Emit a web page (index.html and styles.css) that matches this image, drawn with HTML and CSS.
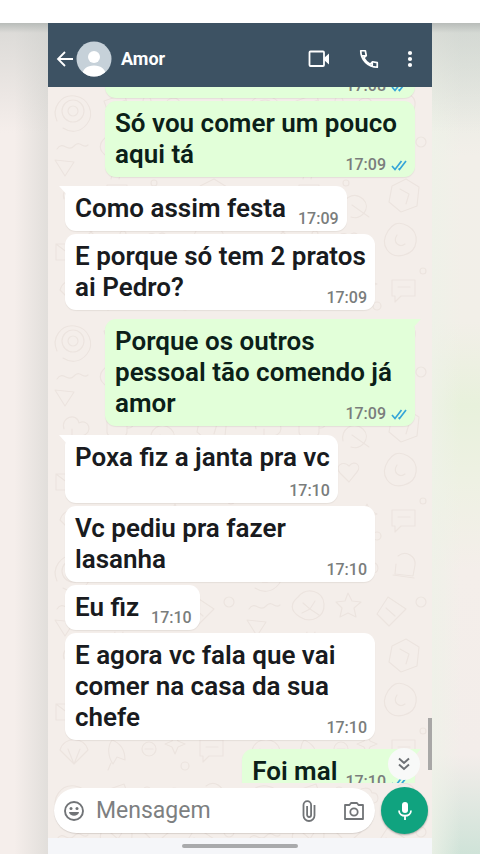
FILE: index.html
```html
<!DOCTYPE html>
<html lang="pt-BR">
<head>
<meta charset="utf-8">
<meta name="viewport" content="width=device-width, initial-scale=1">
<title>Amor</title>
<link rel="stylesheet" href="styles.css">
</head>
<body>
<svg class="defs" width="0" height="0" aria-hidden="true">
  <symbol id="ticks" viewBox="0 0 16 12"><path d="M1 7l3 3.500L10.500 2M7.500 9.500l1 1L15 2" fill="none" stroke="#35a5d8" stroke-width="1.700"/></symbol>
</svg>
<main class="stage">
  <section class="phone">
    <header class="topbar">
      <button class="icon back" aria-label="Voltar"><svg width="18" height="18" viewBox="0 0 18 18"><path d="M17 9H2M9 2L2 9l7 7" fill="none" stroke="#fff" stroke-width="1.800"/></svg></button>
      <svg class="avatar" width="36" height="36" viewBox="0 0 36 36" aria-hidden="true"><defs><clipPath id="face"><circle cx="18" cy="18" r="17.500"/></clipPath></defs><g clip-path="url(#face)"><path fill="#c6d1d9" d="M0 0h36v36H0z"/><circle cx="18" cy="16" r="6" fill="#fff"/><path d="M6 36c0-8 5-11.500 12-11.500S30 28 30 36z" fill="#fff"/></g></svg>
      <h1 class="name">Amor</h1>
      <nav class="actions">
        <button class="icon" aria-label="Chamada de vídeo"><svg width="24" height="24" viewBox="0 0 24 24"><rect x="2.500" y="4.500" width="14.500" height="14.500" rx="1" fill="none" stroke="#fff" stroke-width="1.800"/><path d="M17 11l5-4.500v11L17 13z" fill="#fff"/></svg></button>
        <button class="icon" aria-label="Ligar"><svg width="22" height="22" viewBox="0 0 24 24"><path d="M3 3h5l1 5.300-2.700 2.500c1.700 3.200 3.800 5.200 7 6.900l2.500-2.700 5.200 1v5C11 21 3 13 3 3zM4 8.500h4.500M15.500 15.500V20" fill="none" stroke="#fff" stroke-width="1.900" stroke-linejoin="round"/></svg></button>
        <button class="icon" aria-label="Mais opções"><svg width="6" height="20" viewBox="0 0 6 20"><g fill="#fff"><circle cx="3" cy="4" r="2.100"/><circle cx="3" cy="10" r="2.100"/><circle cx="3" cy="16" r="2.100"/></g></svg></button>
      </nav>
    </header>

    <div class="chat">
      <svg class="wallpaper" aria-hidden="true">
        <defs>
          <pattern id="doodles" width="192" height="230" patternUnits="userSpaceOnUse">
            <g fill="none" stroke="#ece4df" stroke-width="1.200" stroke-linecap="round" stroke-linejoin="round">
              <circle cx="25" cy="24" r="11"/><circle cx="25" cy="24" r="5"/><path d="M9 34c-6-13 4-27 18-25s20 18 12 28-18 8-24 4"/>
              <path d="M56 14l20-7 6 16-20 8zM60 20l18-7"/><circle cx="99" cy="14" r="4"/>
              <path d="M118 26c-6-1-6-9 0-9 1-7 12-8 14-1 7-1 8 9 2 10z"/>
              <path d="M158 9c8-6 18 0 17 9l-2 11-18-2 1-10M153 28l21 3"/>
              <path d="M9 62c6-9 11 4 17-3s9 4 14-1M7 73l10 16 9-14z"/>
              <path d="M58 50c9-11 25-6 26 7s-13 20-24 13-9-14-2-20zM63 56l7 6 5-8M62 66l8-4 9 6"/>
              <path d="M108 46l4 8 9 1-7 6 2 9-8-4-8 4 2-9-6-6 9-1z"/>
              <path d="M148 50l18 12-17 17-12-12zM146 61l9 8"/><circle cx="181" cy="55" r="5"/>
              <path d="M16 112c-4-12 13-17 15-6 10-5 15 10 3 13-1 10-14 8-13 0M24 112v15"/>
              <path d="M59 98h20v17c0 8-20 8-20 0zM79 102c9-2 9 10 0 9M63 92c0-5 4-3 4-7M71 92c0-5 4-3 4-7"/>
              <circle cx="106" cy="96" r="3"/><path d="M103 124c-3-11 10-21 20-12 9 9-2 22-12 18M112 118l17 12"/>
              <path d="M152 99l14-7 13 8-2 19-16 6-12-10zM160 102l9 5-3 10"/>
              <path d="M8 157h24v16H8zM8 157l12 9 12-9M40 142l6 6m0-6l-6 6"/>
              <path d="M60 167c0-12 7-18 15-17s14 8 12 20zM58 168l31 3-1 6-31-3z"/><circle cx="75" cy="147" r="3"/>
              <path d="M109 149c6-7 13 0 8 6l-8 10-9-9c-6-7 3-13 9-7z"/>
              <path d="M148 144c-9 14 1 28 16 24s16-22 4-29-17 1-20 5zM157 148c-5 8 3 13 8 9"/>
              <path d="M12 203c4-14 24-14 28 0l-14 14zM20 202l6 15 6-15"/>
              <path d="M64 193c8 3 13 10 13 20l-8-3-4 7c-5-7-6-17-1-24zM63 216l-3 7"/>
              <circle cx="101" cy="202" r="7"/><path d="M97 202h8M127 187l3 7 7 3-7 3-3 7-3-7-7-3 7-3z"/>
              <path d="M152 193h23v16h-14l-6 6v-6h-3zM158 200h12"/><circle cx="183" cy="184" r="3"/><circle cx="137" cy="219" r="4"/>
            </g>
          </pattern>
        </defs>
        <rect width="100%" height="100%" fill="url(#doodles)"/>
      </svg>

      <div class="thread">
        <ol class="messages">
          <li class="bubble out wide"><span class="meta"><time>17:08</time><svg width="16" height="12"><use href="#ticks"/></svg></span></li>
          <li class="bubble out"><p class="text">Só vou comer um pouco aqui tá</p><span class="meta"><time>17:09</time><svg width="16" height="12"><use href="#ticks"/></svg></span></li>
          <li class="bubble in first row"><p class="text">Como assim festa</p><span class="meta"><time>17:09</time></span></li>
          <li class="bubble in"><p class="text">E porque só tem 2 pratos ai Pedro?</p><span class="meta"><time>17:09</time></span></li>
          <li class="bubble out first"><p class="text">Porque os outros pessoal tão comendo já amor</p><span class="meta"><time>17:09</time><svg width="16" height="12"><use href="#ticks"/></svg></span></li>
          <li class="bubble in first stacked"><p class="text">Poxa fiz a janta pra vc</p><span class="meta"><time>17:10</time></span></li>
          <li class="bubble in"><p class="text">Vc pediu pra fazer lasanha</p><span class="meta"><time>17:10</time></span></li>
          <li class="bubble in row"><p class="text">Eu fiz</p><span class="meta"><time>17:10</time></span></li>
          <li class="bubble in"><p class="text">E agora vc fala que vai comer na casa da sua chefe</p><span class="meta"><time>17:10</time></span></li>
          <li class="bubble out first row"><p class="text">Foi mal</p><span class="meta"><time>17:10</time><svg width="16" height="12"><use href="#ticks"/></svg></span></li>
        </ol>
        <span class="scrollbar"></span>
        <button class="jump" aria-label="Ir para o fim"><svg width="16" height="16" viewBox="0 0 16 16"><path d="M3 2.500l5 4.500 5-4.500M3 8.500l5 4.500 5-4.500" fill="none" stroke="#6d7175" stroke-width="1.900"/></svg></button>
      </div>

      <form class="composer">
        <div class="field">
          <button type="button" class="icon" aria-label="Emoji"><svg width="22" height="22" viewBox="0 0 22 22"><circle cx="11" cy="11" r="9" fill="none" stroke="#717477" stroke-width="1.900"/><circle cx="8" cy="8.500" r="1.500" fill="#717477"/><circle cx="14" cy="8.500" r="1.500" fill="#717477"/><path d="M6 12h10c-.6 5-9.400 5-10 0z" fill="#717477"/></svg></button>
          <input type="text" placeholder="Mensagem" aria-label="Mensagem">
          <button type="button" class="icon" aria-label="Anexar"><svg width="16" height="22" viewBox="0 0 16 22"><path d="M13.500 5v10.500a5.500 5.500 0 0 1-11 0V5a3.800 3.800 0 0 1 7.600 0v10a2 2 0 0 1-4 0V6" fill="none" stroke="#717477" stroke-width="1.800"/></svg></button>
          <button type="button" class="icon camera" aria-label="Câmera"><svg width="22" height="20" viewBox="0 0 22 20"><path d="M2 4h4.500L8 2h6l1.500 2H20v14H2z" fill="none" stroke="#717477" stroke-width="1.800" stroke-linejoin="round"/><circle cx="11" cy="11" r="3.700" fill="none" stroke="#717477" stroke-width="1.800"/></svg></button>
        </div>
        <button type="button" class="mic" aria-label="Gravar áudio"><svg width="16" height="20" viewBox="0 0 16 20"><rect x="5" y="1" width="6" height="11" rx="3" fill="#fff"/><path d="M2 9.500c0 7 12 7 12 0M8 15v4" fill="none" stroke="#fff" stroke-width="1.800"/></svg></button>
      </form>
    </div>
    <div class="gesture"><span></span></div>
  </section>
</main>
</body>
</html>
```
FILE: styles.css
```css
* { box-sizing: border-box; }

body {
  margin: 0;
  height: 100vh;
  padding-top: 23px;
  background: #fff;
  font-family: Roboto, "Liberation Sans", sans-serif;
}

button {
  border: 0;
  padding: 0;
  background: none;
}

svg { display: block; }

.defs { position: absolute; }

.stage {
  height: 100%;
  display: grid;
  grid-template-columns: minmax(0, 1fr) minmax(0, 8fr) minmax(0, 1fr);
  grid-template-rows: minmax(0, 1fr);
  background:
    linear-gradient(#b8bcb9 0, rgba(205, 207, 204, .6) 10px, rgba(225, 226, 222, 0) 110px),
    linear-gradient(90deg, transparent 3%, rgba(212, 212, 208, .6) 10%, transparent 10%),
    linear-gradient(90deg, transparent 90%, rgba(238, 242, 232, .8) 90%, transparent 96%),
    linear-gradient(90deg, #f5eeeb 50%, transparent 50%),
    linear-gradient(#dfe8df 0, #f2efe9 16%, #f2efe8 36%, #e8f1dc 46%, #eef1e3 55%, #f4eeea 66%, #f3edea 88%, #cfe3d8 100%);
}

.phone {
  grid-column: 2;
  min-height: 0;
  display: flex;
  flex-direction: column;
}

.topbar {
  height: 64px;
  flex: none;
  display: flex;
  align-items: center;
  padding: 8px 19px 0 8px;
  background: #3d5263;
}

.avatar { margin-left: 2px; }

.name {
  margin: 0 0 0 9px;
  font-size: 18px;
  line-height: 24px;
  font-weight: 700;
  color: #fff;
}

.actions {
  margin-left: auto;
  display: flex;
  align-items: center;
  gap: 27px;
}

.chat {
  position: relative;
  flex: 1;
  min-height: 0;
  display: flex;
  flex-direction: column;
  background: #f4eeea;
}

.wallpaper {
  position: absolute;
  inset: 0;
  width: 100%;
  height: 100%;
}

.thread {
  position: relative;
  flex: 1;
  min-height: 0;
  overflow: hidden;
}

/* The list is scrolled part of the way through its first bubble. */
.messages {
  list-style: none;
  margin: -34px 0 0;
  padding: 0 17px;
  display: flex;
  flex-direction: column;
  gap: 3px;
}

.bubble {
  position: relative;
  display: grid;
  max-width: 310px;
  padding: 7px 8px 7px 10px;
  border-radius: 11px;
  box-shadow: 0 1px 1px rgba(60, 50, 40, .08);
}

.bubble > * { grid-area: 1 / 1; }

.in { align-self: flex-start; background: #fff; color: #191b20; }
.out { align-self: flex-end; background: #e2ffd9; color: #0b2018; }
.wide { width: 100%; min-height: 45px; }
.first { margin-top: 6px; }

.first::before {
  content: "";
  position: absolute;
  top: 0;
  width: 20px;
  height: 11px;
  background: inherit;
}

.in.first::before { left: -6px; clip-path: polygon(0 0, 100% 0, 100% 100%, 50% 100%); }
.out.first::before { right: -6px; clip-path: polygon(0 0, 100% 0, 50% 100%, 0 100%); }

.row { display: flex; gap: 12px; }
.out.row { gap: 8px; }
.stacked { display: flex; flex-direction: column; padding-bottom: 2px; }

.text {
  margin: 0;
  font-size: 26px;
  line-height: 31px;
  font-weight: 600;
}

.meta {
  align-self: end;
  justify-self: end;
  display: flex;
  align-items: center;
  gap: 5px;
  margin-bottom: -5px;
  font-size: 16px;
  line-height: 20px;
  font-weight: 500;
  color: #7a7d7c;
}

.stacked .meta { margin: 8px 0 0; }

.scrollbar {
  position: absolute;
  right: 0;
  bottom: 13px;
  width: 4px;
  height: 52px;
  background: #a8a7a6;
}

.jump {
  position: absolute;
  right: 12px;
  bottom: 3px;
  width: 32px;
  height: 32px;
  display: grid;
  place-items: center;
  border-radius: 50%;
  background: #f8f9f8;
}

.composer {
  position: relative;
  display: flex;
  align-items: center;
  gap: 6px;
  padding: 4px 4px 4px 6px;
}

.field {
  flex: 1;
  min-width: 0;
  height: 45px;
  display: flex;
  align-items: center;
  padding: 0 10px 0 9px;
  border-radius: 23px;
  background: #fff;
  box-shadow: 0 1px 1px rgba(60, 50, 40, .15);
}

.field input {
  flex: 1;
  min-width: 0;
  margin-left: 11px;
  padding: 0;
  border: 0;
  outline: 0;
  background: none;
  font: 400 23px/32px Roboto, "Liberation Sans", sans-serif;
}

.field input::placeholder { color: #7d7f81; opacity: 1; }

.camera { margin-left: 26px; }

.mic {
  width: 47px;
  height: 47px;
  flex: none;
  display: grid;
  place-items: center;
  border-radius: 50%;
  background: #10a37f;
  box-shadow: 0 1px 2px rgba(0, 0, 0, .3);
}

.gesture {
  flex: none;
  height: 16px;
  display: grid;
  place-items: center;
  background: #f5f6f9;
}

.gesture span {
  width: 30%;
  height: 4px;
  border-radius: 2px;
  background: #a9aaac;
}
```
